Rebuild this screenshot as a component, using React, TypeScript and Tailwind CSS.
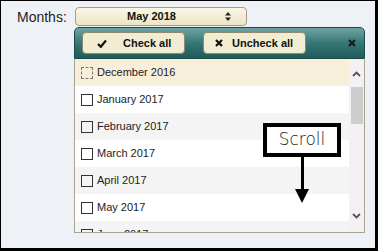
import React from 'react';

const months = ['December 2016', 'January 2017', 'February 2017', 'March 2017', 'April 2017', 'May 2017', 'June 2017'];

function CheckIcon() {
  return (
    <svg width="10" height="9" viewBox="0 0 10 9">
      <path d="M1 5 L3.8 7.8 L9 1.5" fill="none" stroke="#111" strokeWidth="2.2" />
    </svg>
  );
}

function CrossIcon({ color = '#111' }: { color?: string }) {
  return (
    <svg width="8" height="8" viewBox="0 0 8 8">
      <path d="M1 1 L7 7 M7 1 L1 7" stroke={color} strokeWidth="2.2" />
    </svg>
  );
}

export default function App() {
  return (
    <div className="w-[378px] h-[251px] bg-[#eef2f7] border-l border-t border-r-[3px] border-b-[3px] border-black font-['Liberation_Sans',Arial,sans-serif] overflow-hidden">
      <div className="flex pt-[6px] pl-[16px]">
        <div className="text-[14px] leading-none text-[#222] pt-[3px] w-[57px]">Months:</div>
        <div className="flex flex-col">
          {/* select */}
          <div className="ml-[1px] w-[172px] h-[19px] rounded-[4px] border border-[#a49f86] bg-gradient-to-b from-[#faf7e6] to-[#ebe5c5] flex items-center">
            <span className="flex-1 text-center text-[11px] font-bold text-[#111] pl-[2px]">May 2018</span>
            <svg width="6" height="9" viewBox="0 0 6 9" className="mr-[15px]">
              <path d="M3 0 L6 3.5 L0 3.5 Z M3 9 L6 5.5 L0 5.5 Z" fill="#222" />
            </svg>
          </div>
          {/* panel */}
          <div className="relative mt-[1px] w-[291px]">
            <div className="h-[32px] rounded-t-[5px] border border-[#1b4a4a] bg-gradient-to-b from-[#6fa4a4] via-[#377676] to-[#1f5b5b] flex items-center pl-[7px] pr-[8px]">
              <button className="w-[103px] h-[22px] rounded-[4px] border border-[#8e8a70] bg-[#f1ecd2] flex items-center text-[11px] font-bold text-[#111]">
                <span className="ml-[14px] mr-[16px] flex"><CheckIcon /></span>
                Check all
              </button>
              <button className="ml-[18px] w-[103px] h-[22px] rounded-[4px] border border-[#8e8a70] bg-[#f1ecd2] flex items-center text-[11px] font-bold text-[#111]">
                <span className="ml-[11px] mr-[9px] flex"><CrossIcon /></span>
                Uncheck all
              </button>
              <span className="ml-auto flex"><CrossIcon color="#1a1a1a" /></span>
            </div>
            <div className="h-[174px] border-x border-b border-[#a8a58e] bg-white flex">
              <div className="flex-1 overflow-hidden">
                {months.map((m, i) => (
                  <div
                    key={m}
                    className={`h-[27px] flex items-center pl-[6px] ${i === 0 ? 'bg-[#f7efd9]' : i % 2 === 0 ? 'bg-[#f4f4f4]' : 'bg-white'}`}
                  >
                    <span className={`w-[12px] h-[12px] mr-[4px] ${i === 0 ? 'border border-dashed border-[#777]' : 'border border-[#333]'}`} />
                    <span className="text-[11px] text-[#222]">{m}</span>
                  </div>
                ))}
              </div>
              <div className="w-[15px] bg-[#f4f0f4] flex flex-col items-center pt-[12px]">
                <svg width="9" height="6" viewBox="0 0 9 6">
                  <path d="M1 5 L4.5 1.5 L8 5" fill="none" stroke="#555" strokeWidth="1.8" />
                </svg>
                <div className="mt-[10px] w-[12px] h-[37px] bg-[#cdcdcd]" />
                <svg width="9" height="6" viewBox="0 0 9 6" className="mt-auto mb-[13px]">
                  <path d="M1 1 L4.5 4.5 L8 1" fill="none" stroke="#555" strokeWidth="1.8" />
                </svg>
              </div>
            </div>
            {/* annotation */}
            <div className="absolute left-[189px] top-[96px] flex flex-col items-center">
              <div className="w-[78px] h-[34px] border-[4px] border-black bg-white flex items-center justify-center text-[17px] text-[#222] font-['DejaVu_Sans',sans-serif] font-light">
                Scroll
              </div>
              <div className="w-[3px] h-[33px] bg-black" />
              <svg width="14" height="14" viewBox="0 0 14 14" className="-mt-[1px]">
                <path d="M0 0 L14 0 L7 14 Z" fill="#000" />
              </svg>
            </div>
          </div>
        </div>
      </div>
    </div>
  );
}
